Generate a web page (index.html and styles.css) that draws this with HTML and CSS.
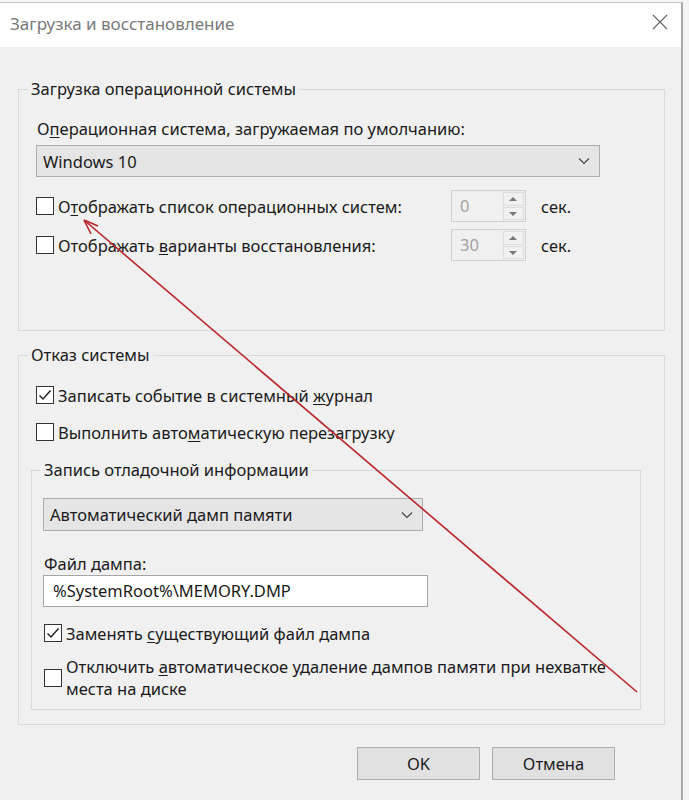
FILE: index.html
```html
<!DOCTYPE HTML>
<html>
<head>
    <title>Загрузка и восстановление</title>
    <link rel="stylesheet" href="styles.css">
</head>
<body>
<div class="window">
    <div class="titlebar">
        <span class="title">Загрузка и восстановление</span>
        <svg class="close" width="16" height="16" viewBox="0 0 16 16">
            <path d="M1 1 L15 15 M15 1 L1 15" stroke="#666" stroke-width="1.2" fill="none"/>
        </svg>
    </div>
    <div class="content">
        <fieldset class="group">
            <legend>Загрузка операционной системы</legend>
            <div class="group-inner boot">
                <div class="label">О<u>п</u>ерационная система, загружаемая по умолчанию:</div>
                <div class="select os-select">
                    <span>Windows 10</span>
                    <svg width="12" height="8" viewBox="0 0 12 8"><path d="M1 1.5 L6 6.5 L11 1.5" stroke="#444" stroke-width="1.2" fill="none"/></svg>
                </div>
                <div class="timer-row">
                    <div class="check wide"><span class="box"></span><span>О<u>т</u>ображать список операционных систем:</span></div>
                    <div class="spinner">
                        <span class="spin-value">0</span>
                        <span class="spin-buttons">
                            <span class="spin-up"></span>
                            <span class="spin-down"></span>
                        </span>
                    </div>
                    <span class="unit">сек.</span>
                </div>
                <div class="timer-row">
                    <div class="check wide"><span class="box"></span><span>Отображать <u>в</u>арианты восстановления:</span></div>
                    <div class="spinner">
                        <span class="spin-value">30</span>
                        <span class="spin-buttons">
                            <span class="spin-up"></span>
                            <span class="spin-down"></span>
                        </span>
                    </div>
                    <span class="unit">сек.</span>
                </div>
            </div>
        </fieldset>

        <fieldset class="group failure">
            <legend>Отказ системы</legend>
            <div class="group-inner fail-inner">
                <div class="check row-first"><span class="box checked"></span><span>Записать событие в системный <u>ж</u>урнал</span></div>
                <div class="check row-second"><span class="box"></span><span>Выполнить авто<u>м</u>атическую перезагрузку</span></div>

                <fieldset class="group debug">
                    <legend>Запись отладочной информации</legend>
                    <div class="debug-inner">
                        <div class="select dump-select">
                            <span>Автоматический дамп памяти</span>
                            <svg width="12" height="8" viewBox="0 0 12 8"><path d="M1 1.5 L6 6.5 L11 1.5" stroke="#444" stroke-width="1.2" fill="none"/></svg>
                        </div>
                        <div class="label dump-label">Файл дампа:</div>
                        <div class="textbox">%SystemRoot%\MEMORY.DMP</div>
                        <div class="check replace"><span class="box checked"></span><span>Заменять <u>с</u>уществующий файл дампа</span></div>
                        <div class="check multi"><span class="box"></span><span>Отключить <u>а</u>втоматическое удаление дампов памяти при нехватке<br>места на диске</span></div>
                    </div>
                </fieldset>
            </div>
        </fieldset>

        <div class="buttons">
            <div class="button">OK</div>
            <div class="button">Отмена</div>
        </div>
    </div>
</div>

<svg class="arrow" width="689" height="800" viewBox="0 0 689 800">
    <path d="M637 692 L84 220" stroke="#b8262b" stroke-width="1.6" fill="none"/>
    <path d="M84 220 L91 234 M84 220 L98 226" stroke="#b8262b" stroke-width="1.6" fill="none"/>
</svg>
</body>
</html>
```

FILE: styles.css
```css
body {
    margin: 0;
    position: relative;
    width: 689px;
    height: 800px;
    overflow: hidden;
    background-color: #f4f4f4;
    font-family: "Noto Sans", "Open Sans", sans-serif;
    font-size: 16.5px;
    color: #1a1a1a;
}

u {
    text-decoration-thickness: 1px;
    text-underline-offset: 2px;
}

.window {
    margin-top: 2px;
    width: 681px;
    height: 798px;
    border-top: 1px solid #c4c4c4;
    border-right: 2px solid #a9a9a9;
    background-color: #f0f0f0;
}

.titlebar {
    height: 44px;
    background-color: #fff;
    display: flex;
    align-items: center;
    justify-content: space-between;
    padding: 0 13px 0 10px;
}

.title {
    color: #7a7a7a;
    font-size: 17px;
    margin-top: -4px;
}

.close {
    margin-top: -6px;
}

.content {
    padding: 32px 16px 0 18px;
}

fieldset.group {
    margin: 0;
    padding: 0;
    min-width: 0;
    border: 1px solid #dadada;
}

legend {
    margin-left: 9px;
    padding: 0 3px;
    line-height: 20px;
    font-size: 16.5px;
}

.group-inner {
    padding: 0 16px 0 17px;
}

.boot {
    padding-top: 20px;
    padding-bottom: 69px;
}

.label {
    line-height: 20px;
    padding-left: 1px;
}

.select {
    box-sizing: border-box;
    height: 32px;
    display: flex;
    align-items: center;
    justify-content: space-between;
    padding: 0 9px 0 6px;
    background-color: #e5e5e5;
    border: 1px solid #adadad;
}

.os-select {
    margin-top: 6px;
    width: 564px;
}

.timer-row {
    display: flex;
    align-items: center;
    height: 32px;
    margin-top: 13px;
}

.timer-row + .timer-row {
    margin-top: 7px;
}

.check {
    display: flex;
    align-items: center;
    gap: 4px;
    white-space: nowrap;
}

.wide {
    width: 415px;
}

.box {
    box-sizing: border-box;
    flex: none;
    width: 18px;
    height: 18px;
    border: 1px solid #333;
    background-color: #fff;
}

.box.checked {
    background: #fff url("data:image/svg+xml,%3Csvg xmlns='http://www.w3.org/2000/svg' width='16' height='16' viewBox='0 0 16 16'%3E%3Cpath d='M2.5 8.5 L6 12 L13.5 3.5' stroke='%23222' stroke-width='1.5' fill='none'/%3E%3C/svg%3E") no-repeat center;
}

.spinner {
    box-sizing: border-box;
    width: 75px;
    height: 32px;
    display: flex;
    border: 1px solid #cfcfcf;
    background-color: #f0f0f0;
}

.spin-value {
    flex: 1;
    padding-left: 8px;
    line-height: 30px;
    color: #a3a3a3;
}

.spin-buttons {
    width: 21px;
    display: flex;
    flex-direction: column;
    gap: 1px;
    padding: 1px;
}

.spin-up, .spin-down {
    flex: 1;
    border: 1px solid #dcdcdc;
    position: relative;
}

.spin-up::after, .spin-down::after {
    content: "";
    position: absolute;
    left: 5px;
    top: 4px;
    border-left: 4px solid transparent;
    border-right: 4px solid transparent;
}

.spin-up::after {
    border-bottom: 4px solid #777;
}

.spin-down::after {
    border-top: 4px solid #777;
}

.unit {
    margin-left: 15px;
}

.failure {
    margin-top: 14px !important;
}

.fail-inner {
    padding: 16px 23px 14px 12px;
}

.fail-inner > .check {
    height: 28px;
    margin-left: 5px;
}

.row-second {
    margin-top: 9px;
}

.debug {
    margin-top: 14px !important;
}

.debug-inner {
    padding: 18px 0 9px 11px;
}

.dump-select {
    width: 380px;
    height: 33px;
}

.dump-label {
    margin-top: 23px;
}

.textbox {
    box-sizing: border-box;
    width: 385px;
    height: 32px;
    margin-top: 1px;
    padding-left: 9px;
    line-height: 30px;
    background-color: #fff;
    border: 1px solid #a5a5a5;
}

.debug-inner .check {
    margin-left: 1px;
}

.replace {
    height: 28px;
    margin-top: 12px;
}

.multi {
    margin-top: 9px;
    line-height: 22px;
}

.buttons {
    display: flex;
    justify-content: flex-end;
    gap: 12px;
    margin-top: 22px;
    padding-right: 50px;
}

.button {
    box-sizing: border-box;
    width: 123px;
    height: 33px;
    line-height: 31px;
    text-align: center;
    background-color: #e1e1e1;
    border: 1px solid #adadad;
}

.arrow {
    position: absolute;
    top: 0;
    left: 0;
    pointer-events: none;
}
```
